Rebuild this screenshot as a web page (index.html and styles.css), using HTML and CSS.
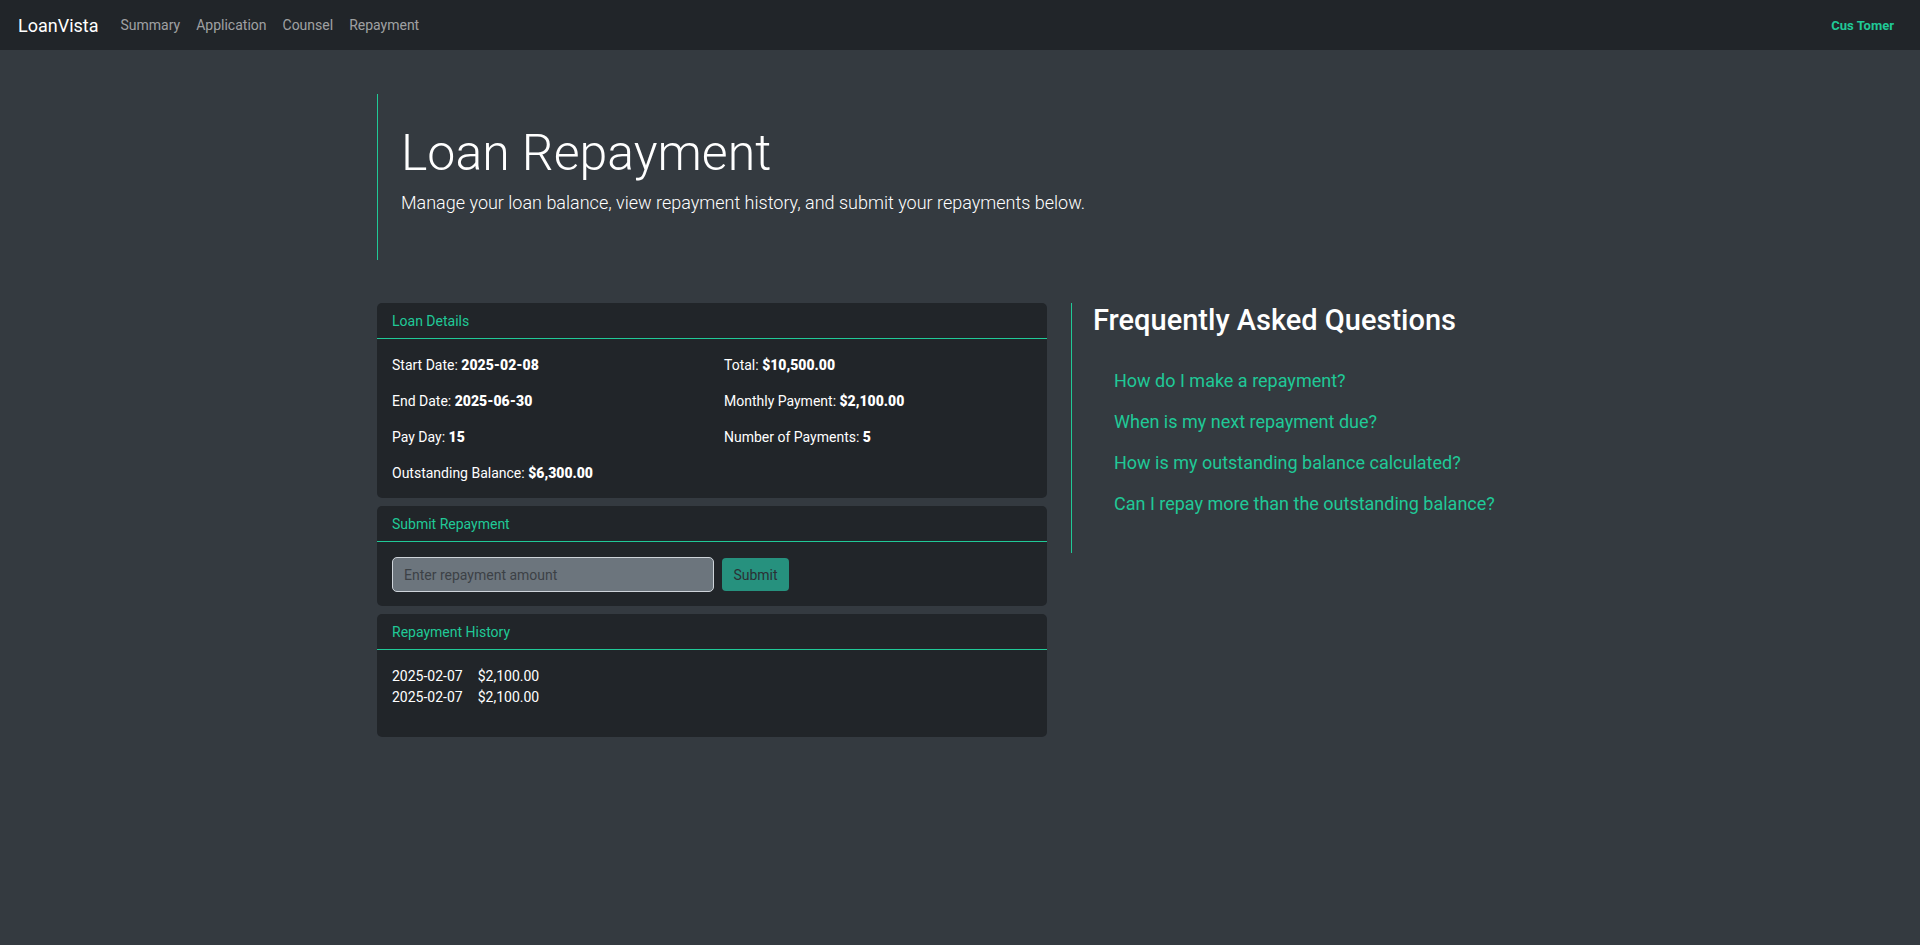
FILE: index.html
```html
<!DOCTYPE html>
<html lang="en">
<head>
<meta charset="utf-8">
<title>LoanVista - Loan Repayment</title>
<link rel="stylesheet" href="styles.css">
</head>
<body>
<nav class="navbar">
  <a class="brand" href="#">LoanVista</a>
  <ul class="nav-links">
    <li><a href="#">Summary</a></li>
    <li><a href="#">Application</a></li>
    <li><a href="#">Counsel</a></li>
    <li><a href="#">Repayment</a></li>
  </ul>
  <a class="user" href="#">Cus Tomer</a>
</nav>
<main class="page">
  <section class="hero">
    <h1 class="hero-title">Loan Repayment</h1>
    <p class="hero-lead">Manage your loan balance, view repayment history, and submit your repayments below.</p>
  </section>
  <div class="content">
    <div class="left-col">
      <div class="card">
        <div class="card-header">Loan Details</div>
        <div class="card-body details">
          <div>Start Date: <strong>2025-02-08</strong></div>
          <div>Total: <strong>$10,500.00</strong></div>
          <div>End Date: <strong>2025-06-30</strong></div>
          <div>Monthly Payment: <strong>$2,100.00</strong></div>
          <div>Pay Day: <strong>15</strong></div>
          <div>Number of Payments: <strong>5</strong></div>
          <div>Outstanding Balance: <strong>$6,300.00</strong></div>
        </div>
      </div>
      <div class="card">
        <div class="card-header">Submit Repayment</div>
        <div class="card-body repay-form">
          <input class="repay-input" type="text" placeholder="Enter repayment amount">
          <button class="btn-submit" type="button">Submit</button>
        </div>
      </div>
      <div class="card">
        <div class="card-header">Repayment History</div>
        <div class="card-body history">
          <div class="history-row"><span>2025-02-07</span><span>$2,100.00</span></div>
          <div class="history-row"><span>2025-02-07</span><span>$2,100.00</span></div>
        </div>
      </div>
    </div>
    <aside class="faq">
      <h3 class="faq-title">Frequently Asked Questions</h3>
      <ul class="faq-list">
        <li><a href="#">How do I make a repayment?</a></li>
        <li><a href="#">When is my next repayment due?</a></li>
        <li><a href="#">How is my outstanding balance calculated?</a></li>
        <li><a href="#">Can I repay more than the outstanding balance?</a></li>
      </ul>
    </aside>
  </div>
</main>
</body>
</html>
```
FILE: styles.css
```css
* { box-sizing: border-box; }
html, body { margin: 0; padding: 0; }
body {
  background: #343a40;
  color: #f8f9fa;
  font-family: Roboto, "Liberation Sans", Arial, sans-serif;
  font-size: 14px;
  min-height: 945px;
}
a { text-decoration: none; }

.navbar {
  display: flex;
  align-items: center;
  height: 50px;
  padding: 0 26px 0 18px;
  background: #212529;
}
.brand {
  color: #fff;
  font-size: 18px;
  margin-right: 22px;
}
.nav-links {
  display: flex;
  gap: 16px;
  list-style: none;
  margin: 0;
  padding: 0;
  flex: 1;
}
.nav-links a {
  color: rgba(255,255,255,0.58);
  font-size: 14px;
}
.user {
  color: #20c997;
  font-weight: 700;
  font-size: 13px;
}

.page {
  width: 1166px;
  margin: 0 auto;
}
.hero {
  margin-top: 44px;
  border-left: 1px solid #20c997;
  padding: 29px 0 44px 23px;
}
.hero-title {
  margin: 0 0 6px;
  font-size: 50px;
  font-weight: 300;
  line-height: 60px;
  color: #fff;
}
.hero-lead {
  margin: 0;
  font-size: 18px;
  font-weight: 300;
  line-height: 27px;
  color: #fff;
}

.content {
  display: grid;
  grid-template-columns: 670px 1fr;
  column-gap: 24px;
  margin-top: 43px;
  align-items: start;
}
.card {
  background: #212529;
  border-radius: 5px;
  margin-bottom: 8px;
}
.card-header {
  color: #20c997;
  font-size: 14px;
  line-height: 19px;
  padding: 9px 15px 7px;
  border-bottom: 1px solid #20c997;
}
.card-body {
  padding: 16px 15px 15px;
}
.details {
  display: grid;
  grid-template-columns: 1fr 1fr;
  column-gap: 24px;
  row-gap: 16px;
  line-height: 20px;
  color: #fff;
}
.details strong { font-weight: 900; }

.repay-form {
  display: flex;
  align-items: center;
  padding: 15px 15px 14px;
}
.repay-input {
  width: 322px;
  height: 35px;
  background: #6c757d;
  border: 1px solid #ced4da;
  border-radius: 5px;
  padding: 0 11px;
  font-family: inherit;
  font-size: 14px;
  color: #212529;
}
.repay-input::placeholder { color: #3c4146; }
.btn-submit {
  margin-left: 8px;
  width: 67px;
  height: 33px;
  border: none;
  border-radius: 4px;
  background: #26917e;
  color: #2b3035;
  font-family: inherit;
  font-size: 14px;
  padding: 0;
}

.history {
  padding: 16px 15px 29px;
  line-height: 21px;
  color: #fff;
  font-weight: 400;
}
.history-row {
  display: flex;
  gap: 15px;
}

.faq {
  border-left: 1px solid #20c997;
  padding: 0 0 29px 21px;
}
.faq-title {
  margin: 0 0 22px;
  font-size: 29px;
  font-weight: 500;
  line-height: 1.2;
  color: #fff;
}
.faq-list {
  list-style: none;
  margin: 0;
  padding: 0 0 0 21px;
}
.faq-list li {
  padding: 7px 0;
  font-size: 18px;
  line-height: 27px;
}
.faq-list a { color: #20c997; }
```
